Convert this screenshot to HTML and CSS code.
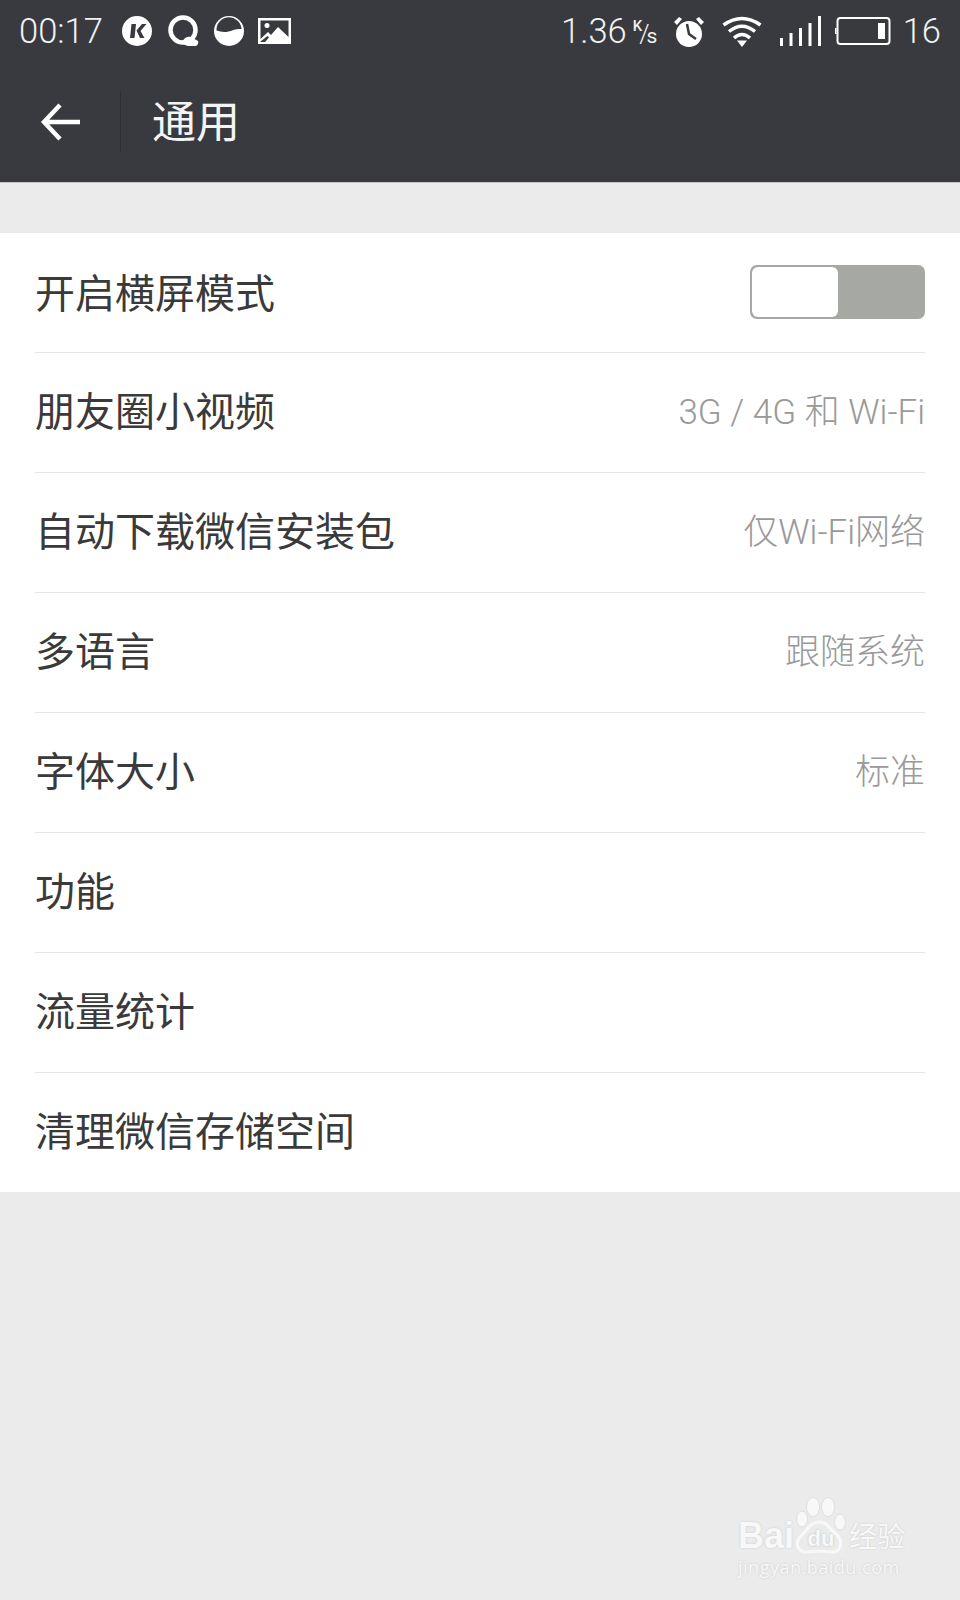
FILE: index.html
```html
<!DOCTYPE html>
<html lang="zh-CN">
<head>
    <meta charset="UTF-8">
    <meta name="viewport" content="width=device-width, initial-scale=1.0">
    <title>通用</title>
    <link rel="stylesheet" href="styles.css">
</head>
<body>
    <header class="top">
        <div class="status">
            <div class="status-left">
                <span class="time">00:17</span>
                <svg class="ic ic-k" viewBox="0 0 30 30"><circle cx="15" cy="15" r="15" fill="#fff"/><path d="M9.500 8h4.500l-1.500 14H8zM14.500 14.500L20 8h4.500l-6 7 4 7h-4.500z" fill="#393a3f"/></svg>
                <svg class="ic ic-q" viewBox="0 0 32 32"><circle cx="15" cy="15" r="12.500" fill="none" stroke="#fff" stroke-width="4.500"/><path d="M14 27q3-6 9-5l7 4q1 3-2 5h-8q-4-1-6-4z" fill="#fff"/></svg>
                <svg class="ic ic-w" viewBox="0 0 30 30"><circle cx="15" cy="15" r="15" fill="#fff"/><path d="M2.500 14.500a12.500 12.500 0 0 1 25-1.500c-5-.5-8 1-13 2.500-4 1-8 .5-12-1z" fill="#393a3f"/></svg>
                <svg class="ic ic-p" viewBox="0 0 33 26"><rect width="33" height="26" fill="#fff"/><path d="M2.500 2.500h28V19L20 9l-7 8-3-3-7.500 7zM2.500 24v-.5L9.500 18l1.500 1.500L7 24z" fill="#393a3f"/><circle cx="9" cy="7.500" r="2.500" fill="#fff"/></svg>
            </div>
            <div class="status-right">
                <span class="speed">1.36</span>
                <span class="unit"><i class="u-k">K</i><i class="u-slash">/</i><i class="u-s">s</i></span>
                <svg class="ic ic-clock" viewBox="0 0 30 31"><circle cx="15" cy="18" r="13" fill="#fff"/><path d="M0 6l5-5 3 2-5 6zM30 6l-5-5-3 2 5 6z" fill="#fff"/><path d="M13 8l2 10 7 5" fill="none" stroke="#393a3f" stroke-width="2.500"/></svg>
                <svg class="ic ic-wifi" viewBox="0 0 40 32"><g fill="none" stroke="#fff" stroke-width="3.500"><path d="M1.500 10Q20-3 38.500 10"/><path d="M7 16.500Q20 6 33 16.500"/><path d="M12 23q8-7 16 0"/></g><path d="M15 25.500h10l-5 6.500z" fill="#fff"/></svg>
                <svg class="ic ic-signal" viewBox="0 0 41 30"><path d="M0 22h3v8H0zM9.500 17h3v13h-3zM19 12h3v18h-3zM28.500 7h3v23h-3zM38 0h3v30h-3z" fill="#fff"/></svg>
                <svg class="ic ic-batt" viewBox="0 0 56 28"><rect x="2.500" y="1" width="52" height="26" rx="3" fill="none" stroke="#fff" stroke-width="2"/><path d="M0 11h1.500v6H0z" fill="#fff"/><path d="M43 6h7v16h-7z" fill="#fff"/></svg>
                <span class="level">16</span>
            </div>
        </div>
        <div class="bar">
            <svg class="back" viewBox="0 0 42 40"><path d="M40 20H5M20 3L4 20l16 17" fill="none" stroke="#fff" stroke-width="4.500"/></svg>
            <div class="divider"></div>
            <h1>通用</h1>
        </div>
    </header>

    <main class="list">
        <div class="row row-switch">
            <span class="label">开启横屏模式</span>
            <div class="switch"><div class="knob"></div></div>
        </div>
        <div class="row">
            <span class="label">朋友圈小视频</span>
            <span class="value">3G / 4G 和 Wi-Fi</span>
        </div>
        <div class="row">
            <span class="label">自动下载微信安装包</span>
            <span class="value">仅Wi-Fi网络</span>
        </div>
        <div class="row">
            <span class="label">多语言</span>
            <span class="value">跟随系统</span>
        </div>
        <div class="row">
            <span class="label">字体大小</span>
            <span class="value">标准</span>
        </div>
        <div class="row">
            <span class="label">功能</span>
        </div>
        <div class="row">
            <span class="label">流量统计</span>
        </div>
        <div class="row">
            <span class="label">清理微信存储空间</span>
        </div>
    </main>

    <!-- 水印 -->
    <div class="mark">
        <div class="mark-top">
            <span class="mark-bai">Bai</span>
            <div class="mark-paw">
                <svg class="paw" viewBox="0 0 53 58">
                    <g fill="#f8f8f8" stroke="#dedede" stroke-width="1">
                        <ellipse cx="7" cy="22" rx="5.500" ry="8"/>
                        <ellipse cx="18" cy="10" rx="6.500" ry="9.500"/>
                        <ellipse cx="33" cy="10" rx="6.500" ry="9.500"/>
                        <ellipse cx="45" cy="25" rx="5.500" ry="8"/>
                    </g>
                    <path d="M24 25C32 25 35 32 41 37 49 44 46 56 36 55 28 54 20 54 12 55 3 56-1 46 6 39 12 34 15 25 24 25z" fill="#ebebeb" stroke="#f8f8f8" stroke-width="3"/>
                </svg>
                <span class="mark-du">du</span>
            </div>
            <span class="mark-cn">经验</span>
        </div>
        <div class="mark-url">jingyan.baidu.com</div>
    </div>
</body>
</html>
```

FILE: styles.css
```css
body {
    font-family: "Liberation Sans", "Noto Sans CJK SC", sans-serif;
    background-color: #ebebeb;
    margin: 0;
    padding: 0;
    width: 960px;
    height: 1600px;
    position: relative;
    overflow: hidden;
}

.top {
    background-color: #393a3f;
    height: 182px;
    border-bottom: 1px solid #c4c4c4;
    color: #fff;
}

.status {
    display: flex;
    justify-content: space-between;
    align-items: center;
    height: 62px;
    padding: 0 19px;
}

.status-left,
.status-right {
    display: flex;
    align-items: center;
}

.time,
.speed,
.level {
    font-family: Roboto, sans-serif;
    font-weight: 300;
    font-size: 34.5px;
    color: #f2f2f2;
}

.ic {
    display: block;
}

.ic-k {
    width: 30px;
    height: 30px;
    margin-left: 19px;
}

.ic-q {
    width: 32px;
    height: 32px;
    margin-left: 16px;
}

.ic-w {
    width: 30px;
    height: 30px;
    margin-left: 14px;
}

.ic-p {
    width: 33px;
    height: 26px;
    margin-left: 14px;
}

.unit {
    font-family: Roboto, sans-serif;
    width: 28px;
    margin-left: 6px;
    display: flex;
    align-items: center;
    height: 30px;
    color: #f2f2f2;
}

.unit i {
    font-style: normal;
}

.u-k {
    font-size: 15px;
    font-weight: 500;
    margin-bottom: 10px;
}

.u-slash {
    font-size: 26px;
    font-weight: 300;
    margin-left: -3px;
    margin-top: 6px;
}

.u-s {
    font-size: 21px;
    margin-left: -3px;
    margin-top: 10px;
}

.ic-clock {
    width: 30px;
    height: 31px;
    margin-left: 13px;
}

.ic-wifi {
    width: 40px;
    height: 32px;
    margin-left: 18px;
}

.ic-signal {
    width: 41px;
    height: 30px;
    margin-left: 18px;
}

.ic-batt {
    width: 56px;
    height: 28px;
    margin-left: 14px;
}

.level {
    margin-left: 12px;
}

.bar {
    display: flex;
    align-items: center;
    height: 120px;
    padding-left: 40px;
}

.back {
    width: 42px;
    height: 40px;
}

.divider {
    width: 1px;
    height: 60px;
    background-color: #2e2f33;
    margin-left: 38px;
}

h1 {
    font-size: 44px;
    font-weight: 400;
    margin: 0 0 0 31px;
    padding-bottom: 7px;
    color: #f4f4f4;
}

.list {
    background-color: #ffffff;
    margin-top: 50px;
    padding: 0 35px;
}

.row {
    display: flex;
    justify-content: space-between;
    align-items: center;
    height: 119px;
    border-bottom: 1px solid #e5e5e5;
}

.row:last-child {
    border-bottom: none;
}

.label {
    font-size: 40px;
    color: #3a3a3a;
    padding-bottom: 8px;
}

.row-switch .label {
    padding-bottom: 4px;
}

.value {
    font-family: Roboto, "Noto Sans CJK SC", sans-serif;
    font-weight: 300;
    font-size: 35px;
    color: #999999;
    padding-bottom: 8px;
}

.switch {
    width: 175px;
    height: 54px;
    background-color: #a5a8a3;
    border-radius: 7px;
    padding: 2px;
    box-sizing: border-box;
    margin-bottom: 2px;
}

.knob {
    width: 86px;
    height: 50px;
    background-color: #fff;
    border-radius: 6px;
}

.mark {
    position: absolute;
    left: 738px;
    top: 1497px;
    width: 175px;
    color: #f8f8f8;
}

.mark-top {
    display: flex;
    align-items: flex-end;
    height: 58px;
}

.mark-bai {
    font-size: 36px;
    line-height: 36px;
    font-weight: 700;
    margin-bottom: 1px;
    text-shadow: 0 0 2px #c4c4c4;
}

.mark-paw {
    position: relative;
    width: 53px;
    height: 58px;
    margin-left: 1px;
}

.paw {
    display: block;
    width: 53px;
    height: 58px;
}

.mark-du {
    position: absolute;
    left: 8px;
    bottom: 3px;
    width: 36px;
    text-align: center;
    font-size: 22px;
    line-height: 26px;
    font-weight: 700;
    text-shadow: 0 0 2px #b8b8b8;
}

.mark-cn {
    font-size: 28px;
    line-height: 28px;
    margin-bottom: 3px;
    margin-left: 1px;
    text-shadow: 0 0 2px #c4c4c4;
    white-space: nowrap;
}

.mark-url {
    font-family: "Open Sans", sans-serif;
    font-size: 18px;
    line-height: 24px;
    letter-spacing: 0.5px;
    text-shadow: 0 0 2px #c4c4c4;
    white-space: nowrap;
}
```
